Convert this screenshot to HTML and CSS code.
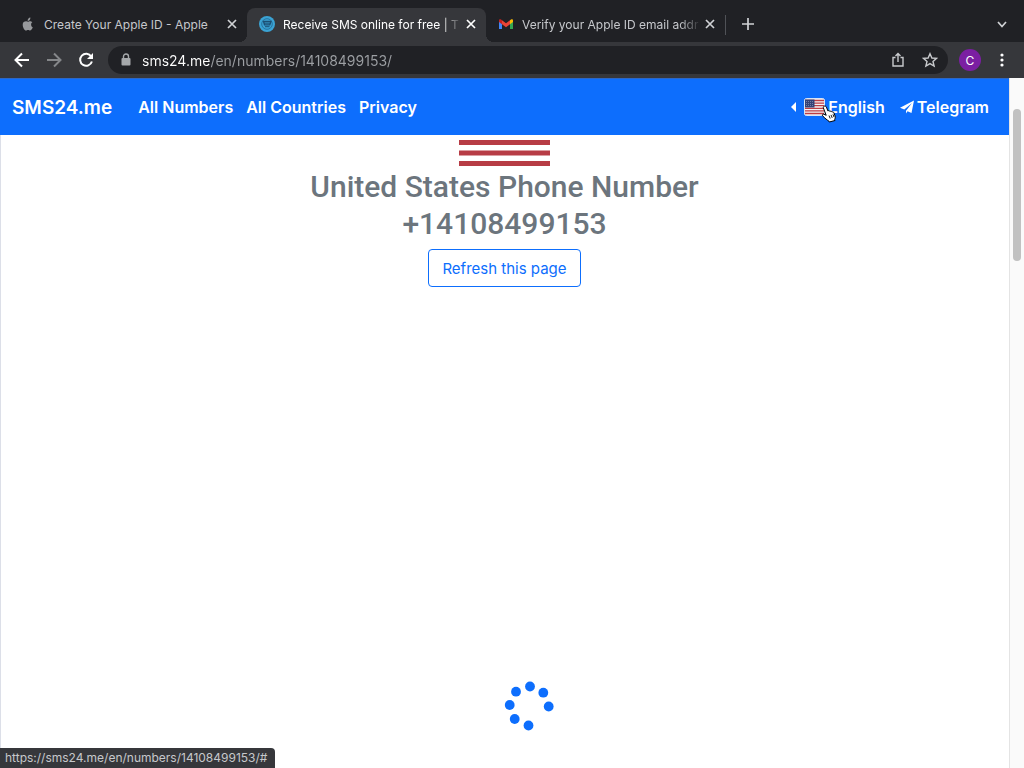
FILE: index.html
```html
<!DOCTYPE html>
<html lang="en">
<head>
    <meta charset="UTF-8">
    <meta name="viewport" content="width=device-width, initial-scale=1.0">
    <title>Receive SMS online for free</title>
    <link rel="stylesheet" href="styles.css">
</head>
<body>
    <div class="tab-strip">
        <div class="tab">
            <svg class="tab-icon" viewBox="0 0 16 16" fill="#97999c">
                <path d="M11.1 8.4c0-1.4 1.1-2 1.2-2.1-.7-1-1.7-1.1-2.1-1.1-.9-.1-1.7.5-2.1.5-.5 0-1.1-.5-1.9-.5C4.3 5.2 2.7 6.1 2.7 8.7c0 2.7 1.9 5.8 3.3 5.8.8 0 1.1-.5 2.1-.5s1.2.5 2.1.5c1.1 0 2.2-2 2.6-3.2-1.1-.5-1.7-1.5-1.7-2.9z"/>
                <path d="M9.7 3.9c.5-.6.8-1.4.7-2.3-.8.1-1.6.5-2.1 1.1-.4.5-.8 1.3-.7 2.1.8.1 1.6-.3 2.1-.9z"/>
            </svg>
            <span class="tab-title">Create Your Apple ID - Apple</span>
            <button class="tab-close" aria-label="Close tab">
                <svg width="12" height="12" viewBox="0 0 12 12"><path d="M2 2l8 8M10 2l-8 8"/></svg>
            </button>
        </div>
        <div class="tab active">
            <svg class="tab-icon" viewBox="0 0 16 16">
                <circle cx="8" cy="8" r="8" fill="#3ba3d4"/>
                <circle cx="8" cy="8" r="5.3" fill="none" stroke="#2573a0"/>
                <path d="M4.5 5.5h7.5l-1.2 3.3H5.5z" fill="none" stroke="#1c4f73" stroke-width="1.3"/>
                <path d="M5 7.2h6M6 10.7h4.5" stroke="#1c4f73"/>
            </svg>
            <span class="tab-title fade">Receive SMS online for free | T</span>
            <button class="tab-close" aria-label="Close tab">
                <svg width="12" height="12" viewBox="0 0 12 12"><path d="M2 2l8 8M10 2l-8 8"/></svg>
            </button>
        </div>
        <div class="tab">
            <svg class="tab-icon" viewBox="0 0 16 16">
                <path d="M1 4.5v8.5h3V6.5z" fill="#4285f4"/>
                <path d="M15 4.5v8.5h-3V6.5z" fill="#34a853"/>
                <path d="M12 4.3l1-.8c1-.7 2 0 2 1v1.5l-3 2.3z" fill="#fbbc04"/>
                <path d="M4 4.3l-1-.8c-1-.7-2 0-2 1v1.5l3 2.3z" fill="#c5221f"/>
                <path d="M4 4.3l4 3 4-3v4l-4 3-4-3z" fill="#ea4335"/>
            </svg>
            <span class="tab-title fade">Verify your Apple ID email addr</span>
            <button class="tab-close" aria-label="Close tab">
                <svg width="12" height="12" viewBox="0 0 12 12"><path d="M2 2l8 8M10 2l-8 8"/></svg>
            </button>
        </div>
        <span class="tab-divider"></span>
        <button class="new-tab" aria-label="New tab">
            <svg width="16" height="16" viewBox="0 0 16 16"><path d="M8 2v12M2 8h12"/></svg>
        </button>
        <button class="tab-search" aria-label="Search tabs">
            <svg width="16" height="16" viewBox="0 0 16 16"><path d="M4 6l4 4.5L12 6"/></svg>
        </button>
    </div>

    <div class="toolbar">
        <button class="tool" aria-label="Back">
            <svg width="16" height="16" viewBox="0 0 16 16"><path d="M15 8H2M8 1.5L1.5 8 8 14.5"/></svg>
        </button>
        <button class="tool" aria-label="Forward" disabled>
            <svg width="16" height="16" viewBox="0 0 16 16"><path d="M1 8h13M8 1.5L14.5 8 8 14.5"/></svg>
        </button>
        <button class="tool" aria-label="Reload">
            <svg width="16" height="16" viewBox="0 0 16 16">
                <path d="M13.2 4.5A6 6 0 1 0 13.9 9.5"/>
                <path d="M15 1v6H9z" fill="#fff" stroke="none"/>
            </svg>
        </button>
        <div class="omnibox">
            <svg class="lock" width="10" height="14" viewBox="0 0 10 14">
                <rect x="0.5" y="5" width="9" height="7.5" rx="1" fill="#a5a8ab"/>
                <path d="M2.5 5.5V3.5a2.5 2.5 0 0 1 5 0v2" fill="none" stroke="#a5a8ab" stroke-width="1.4"/>
            </svg>
            <input class="address" type="text" aria-label="Address" value="sms24.me/en/numbers/14108499153/">
            <button class="omni-button" aria-label="Share">
                <svg width="16" height="16" viewBox="0 0 16 16"><path d="M5.5 5.5H3v8.5h10V5.5h-2.5M8 10V1.5M5.5 4L8 1.5 10.5 4"/></svg>
            </button>
            <button class="omni-button" aria-label="Bookmark">
                <svg width="16" height="16" viewBox="0 0 16 16"><path d="M8 1.7l1.9 4.3 4.7.4-3.6 3.1 1.1 4.6L8 11.6l-4.1 2.5L5 9.5 1.4 6.4l4.7-.4z"/></svg>
            </button>
        </div>
        <button class="avatar" aria-label="Profile">C</button>
        <button class="menu" aria-label="Menu">
            <svg width="16" height="16" viewBox="0 0 16 16" fill="#fff">
                <circle cx="8" cy="3" r="1.6"/>
                <circle cx="8" cy="8" r="1.6"/>
                <circle cx="8" cy="13" r="1.6"/>
            </svg>
        </button>
    </div>

    <div class="viewport">
        <div class="page">
            <header class="navbar">
                <a class="brand" href="#">SMS24.me</a>
                <nav class="nav-links">
                    <a href="#">All Numbers</a>
                    <a href="#">All Countries</a>
                    <a href="#">Privacy</a>
                </nav>
                <nav class="nav-right">
                    <a class="language" href="#">
                        <svg class="caret" width="5" height="10" viewBox="0 0 5 10"><path d="M5 0v10L0 5z" fill="#fff"/></svg>
                        <svg class="flag-small" width="21" height="18" viewBox="0 0 21 18">
                            <rect x="0.5" y="0.5" width="20" height="17" rx="2" fill="#f3f3f5" stroke="#d8e5f6"/>
                            <path d="M1 2.5h19M1 5.1h19M1 7.7h19M1 10.3h19M1 12.9h19M1 15.5h19" stroke="#bd3d44" stroke-width="1.3"/>
                            <path d="M1 1.5h9.5v8H1z" fill="#344277"/>
                            <path d="M2 3.5h8M2 5.5h8M2 7.5h8" stroke="#8c96b8" stroke-width="0.7" stroke-dasharray="1 1"/>
                        </svg>
                        English
                        <svg class="cursor" width="16" height="18" viewBox="0 0 16 18">
                            <path d="M3.2 1.2c.9-.5 1.8 0 2.2.9l1.5 3.8c.7-.5 1.6-.3 2 .5.7-.5 1.7-.2 2 .6.8-.4 1.7 0 2 .8l1.2 3.2c.4 1.3.1 2.2-.4 3.3l.3 1.2-5.7 1.500-.7-1.200c-1.600-.7-3.500-2.600-5.800-4.700-1-1 0-2.300 1.200-1.900l2.200 1.100L2.400 3c-.3-.8 0-1.500.8-1.800z" fill="#fff" stroke="#000"/>
                            <path d="M8 10.5l1.2 3M10 9.9l1.2 3M12 9.3l1 2.8" stroke="#000" stroke-width="0.9"/>
                        </svg>
                    </a>
                    <a class="telegram" href="#">
                        <svg width="14" height="14" viewBox="0 0 14 14" fill="#fff">
                            <path d="M14 .5L11.5 13 7.5 11.3 6 13.5V10.7L12 3 4.3 9.5 0 7.7z"/>
                        </svg>
                        Telegram
                    </a>
                </nav>
            </header>

            <main class="content">
                <svg class="flag-large" width="91" height="26" viewBox="0 0 91 26" fill="#b73c45">
                    <rect width="91" height="5"/>
                    <rect y="10.5" width="91" height="5"/>
                    <rect y="21" width="91" height="5"/>
                </svg>
                <h1>United States Phone Number<br>+14108499153</h1>
                <button class="refresh">Refresh this page</button>
                <div class="loader">
                    <svg width="50" height="50" viewBox="0 0 50 50" fill="#0d6efd">
                        <circle cx="26" cy="5.5" r="4.9"/>
                        <circle cx="39.3" cy="11.7" r="4.9"/>
                        <circle cx="44.7" cy="25.5" r="4.9"/>
                        <circle cx="24.5" cy="44.5" r="4.9"/>
                        <circle cx="10.7" cy="38" r="4.9"/>
                        <circle cx="5.7" cy="24" r="4.9"/>
                        <circle cx="12" cy="10.7" r="4.9"/>
                    </svg>
                </div>
            </main>
        </div>
        <div class="scrollbar"><div class="thumb"></div></div>
        <div class="status">https://sms24.me/en/numbers/14108499153/#</div>
    </div>
</body>
</html>
```
FILE: styles.css
```css
* {
    margin: 0;
    padding: 0;
    box-sizing: border-box;
}

body {
    font-family: Inter, 'Liberation Sans', sans-serif;
    height: 100vh;
    display: flex;
    flex-direction: column;
    overflow: hidden;
    background-color: #fff;
}

button {
    font-family: inherit;
    background: none;
    border: none;
    cursor: pointer;
}

svg {
    display: block;
    flex: none;
}

a {
    color: inherit;
    text-decoration: none;
}

/* browser tabs */
.tab-strip {
    display: flex;
    height: 42px;
    padding: 8px 14px 0 8px;
    background-color: #202125;
}

.tab {
    position: relative;
    display: flex;
    align-items: center;
    width: 239px;
    padding: 0 9px 2px 12px;
    gap: 8px;
    color: #c6c8cc;
    font-size: 12px;
    border-radius: 8px 8px 0 0;
}

.tab.active {
    background-color: #36373b;
    color: #fff;
}

/* flared feet of the open tab */
.tab.active::before,
.tab.active::after {
    content: '';
    position: absolute;
    bottom: 0;
    width: 8px;
    height: 8px;
}

.tab.active::before {
    right: 100%;
    background: radial-gradient(circle at 0 0, transparent 8px, #36373b 8px);
}

.tab.active::after {
    left: 100%;
    background: radial-gradient(circle at 100% 0, transparent 8px, #36373b 8px);
}

.tab-icon {
    width: 16px;
    height: 16px;
}

.tab-title {
    flex: 1;
    margin-right: -5px;
    white-space: nowrap;
}

.fade {
    -webkit-mask-image: linear-gradient(to right, #000 88%, transparent);
    mask-image: linear-gradient(to right, #000 88%, transparent);
}

.tab-close {
    width: 12px;
}

.new-tab,
.tab-search {
    display: flex;
    align-items: center;
    width: 16px;
    padding-bottom: 2px;
}

.tab-strip button svg {
    fill: none;
    stroke: #d0d2d5;
    stroke-width: 1.7;
}

.tab.active .tab-close svg {
    stroke: #fff;
}

.tab-divider {
    width: 1px;
    height: 20px;
    margin-top: 7px;
    background-color: #505257;
}

.new-tab {
    margin-left: 14px;
}

.tab-search {
    margin-left: auto;
}

/* toolbar */
.toolbar {
    display: flex;
    align-items: center;
    height: 36px;
    padding: 0 14px 0 6px;
    background-color: #36373b;
}

.tool {
    display: flex;
    justify-content: center;
    width: 32px;
}

.tool svg {
    fill: none;
    stroke: #fff;
    stroke-width: 2;
}

.tool:disabled svg {
    stroke: #85878a;
}

.omnibox {
    flex: 1;
    display: flex;
    align-items: center;
    height: 28px;
    margin: 0 11px 0 6px;
    padding: 0 2px 0 13px;
    background-color: #202125;
    border-radius: 14px;
}

/* host part is brighter than the path */
.address {
    flex: 1;
    min-width: 0;
    margin-left: 11px;
    border: none;
    outline: none;
    font-family: inherit;
    font-size: 14px;
    color: #9aa0a6;
    background: linear-gradient(to right, #fff 68px, #9da0a4 68px);
    -webkit-background-clip: text;
    background-clip: text;
    -webkit-text-fill-color: transparent;
}

.omni-button {
    display: flex;
    justify-content: center;
    width: 32px;
}

.omni-button svg {
    fill: none;
    stroke: #c8cacd;
    stroke-width: 1.4;
}

.avatar {
    width: 22px;
    height: 22px;
    border-radius: 50%;
    background-color: #7b1fa2;
    color: #fff;
    font-size: 12px;
}

.menu {
    margin-left: 13px;
}

/* web page */
.viewport {
    flex: 1;
    display: flex;
    position: relative;
    min-height: 0;
}

.page {
    flex: 1;
    display: flex;
    flex-direction: column;
}

.navbar {
    display: flex;
    align-items: center;
    height: 57px;
    padding: 0 20px 0 12px;
    background-color: #0d6efd;
    border-top: 1px solid #2e67c4;
    color: #fff;
    font-size: 16px;
    font-weight: 600;
}

.brand {
    font-size: 19px;
    margin-right: 26px;
}

.nav-links {
    display: flex;
    gap: 13px;
}

.nav-right {
    display: flex;
    gap: 15px;
    margin-left: auto;
}

.language,
.telegram {
    position: relative;
    display: flex;
    align-items: center;
    gap: 3px;
}

.caret {
    margin-right: 5px;
}

.cursor {
    position: absolute;
    left: 30px;
    top: 8px;
}

.content {
    flex: 1;
    display: flex;
    flex-direction: column;
    align-items: center;
    padding: 5px 0 37px;
    box-shadow: inset 1px 0 #dcdfe8;
}

h1 {
    margin: 2px 0 7px;
    color: #6c757d;
    font-family: Roboto, Inter, sans-serif;
    font-size: 30px;
    font-weight: 500;
    line-height: 37px;
    text-align: center;
}

.refresh {
    height: 38px;
    padding: 0 13px;
    border: 1px solid #0d6efd;
    border-radius: 4px;
    color: #0d6efd;
    font-size: 15px;
}

.loader {
    margin-top: auto;
    padding-left: 48px;
}

.scrollbar {
    width: 15px;
    padding: 31px 3px 0 3px;
    background-color: #fafafa;
    border-left: 1px solid #e4e4e4;
}

.thumb {
    height: 152px;
    border-radius: 4px;
    background-color: #c1c1c1;
}

.status {
    position: absolute;
    left: 0;
    bottom: 0;
    height: 20px;
    padding: 0 8px 0 5px;
    background-color: #36373b;
    border-radius: 0 4px 0 0;
    color: #c6c8cb;
    font-size: 12px;
    line-height: 20px;
}
```
